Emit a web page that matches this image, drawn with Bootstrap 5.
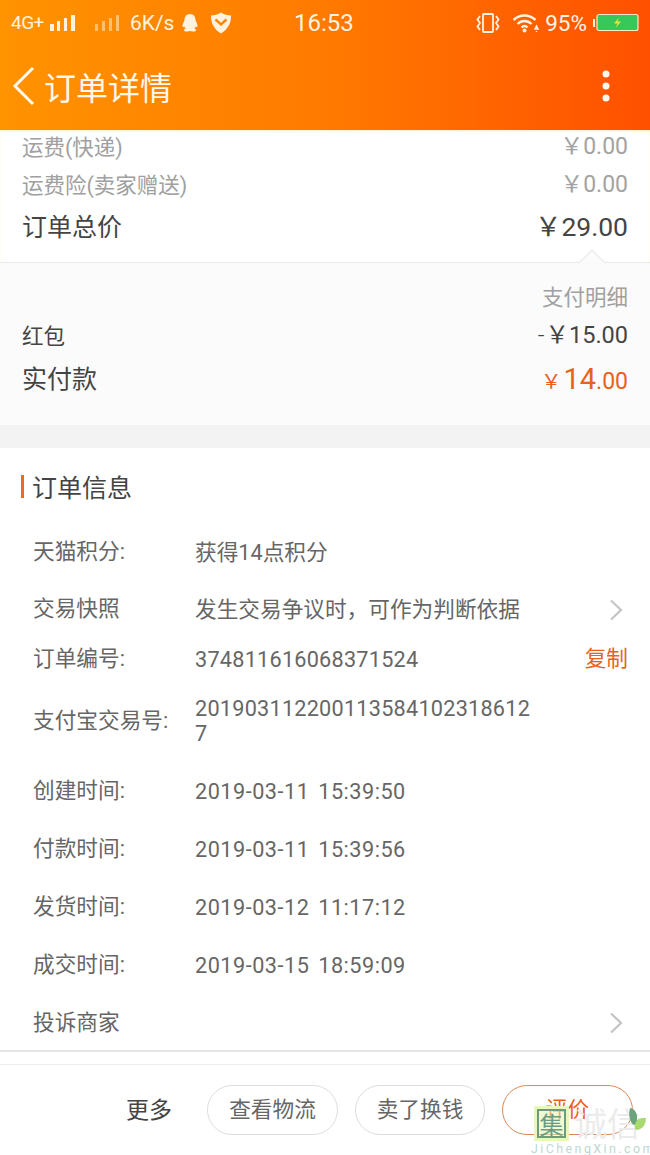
<!DOCTYPE html>
<html lang="zh">
<head>
<meta charset="utf-8">
<title>订单详情</title>
<link rel="stylesheet" href="https://cdn.jsdelivr.net/npm/bootstrap@5.3.0/dist/css/bootstrap.min.css">
<style>
html,body{margin:0;background:#fff;overflow:hidden}
body{width:650px;height:1155px;font-family:"Roboto","Noto Sans CJK SC",sans-serif;color:#666;position:relative}
.top-head{height:130px;background:linear-gradient(90deg,#ff9300 0%,#ff7a00 50%,#ff5000 100%);color:#fff3e0}
.stat-bar{height:46px;padding:0 11px;line-height:46px}
.stat-time{position:absolute;left:294px;top:0;font-size:24px}
.sig-txt{font-size:19px;letter-spacing:-.5px}
.sig-a{margin-left:5px}.sig-b{margin-left:18px}
.speed-txt{font-size:21px;margin-left:10px}
.qq-ico{margin-left:7px}.shield-ico{margin-left:12px}
.vib-ico{margin-left:auto}.wifi-ico{margin-left:12px}
.pct-txt{font-size:22.5px;margin-left:6px}.batt-ico{margin-left:6px}
.title-bar{height:84px;padding:0 40px 4px 12px}
.title-txt{font-size:32px;line-height:80px;margin-left:8px;color:#fff8ec;font-family:"Noto Sans CJK SC",sans-serif}
.fee-box{height:132px;padding:0 22px;box-shadow:inset 0 2px 3px -1px #ffeebb}
.fee-a{height:37px}.fee-b{height:39px}.fee-c{height:42px;padding-top:1px}
.soft{font-size:21.5px;color:#a0a0a0}
.strong-l{font-size:25px;color:#444}
.strong-r{font-size:26.5px;color:#444;margin-bottom:1px}
.soft-r{font-size:23px;color:#a3a3a3;margin-bottom:3px}
.pay-box{height:163px;padding:16px 22px 0;background:#fbfbfb;border-top:1px solid #e8e8e8;position:relative}
.pay-caret{position:absolute;left:583px;top:-10px;width:18px;height:18px;background:#fbfbfb;border-left:1px solid #e8e8e8;border-top:1px solid #e8e8e8;transform:rotate(45deg)}
.pay-a{height:38px}.pay-b{height:40px}.pay-c{height:46px}
.dark-m{font-size:21.5px;color:#444}
.dark-n{font-size:23.5px;color:#444;margin-bottom:3px}
.dash-thin{font-weight:300;margin-right:1px}
.hot{color:#e9611a}
.hot-s{font-size:20.5px}.hot-b{font-size:29px;margin:0 0 0 2px}.hot-t{font-size:23px}
.gap-band{height:23px;background:#f3f3f3}
.info-box{height:602px}
.info-head{height:75px;padding:2px 21px 0}
.info-bar{width:3px;height:23px;background:#f06a1c;margin-right:8px}
.info-title{font-size:25px;color:#444;font-family:"Noto Sans CJK SC",sans-serif}
.info-row{padding:0 22px 0 33px;font-size:21.67px;color:#666}
.info-lab{width:162px;flex:none}
.info-val{width:345px;flex:none;line-height:25px;word-break:break-all}
.num-val{letter-spacing:.24px}
.time-val{letter-spacing:.5px;word-spacing:3px}
.h58{height:58px}.h57{height:57px}.h42{height:42px}.h82{height:82px}.h56{height:56px;padding-top:2px}
.chev{margin-left:auto;margin-right:5px}
.copy-link{margin-left:auto;color:#e9611a;font-size:21.67px;white-space:nowrap}
.foot-line{height:15px;border-top:2px solid #e6e6e6;border-bottom:1px solid #ececec}
.foot-bar{height:90px;padding:0 17px 0 0;gap:17px}
.more-txt{font-size:23px;color:#444;margin-right:18px;padding-top:2px}
.pill{width:131px;height:50px;border:1px solid #ddd;border-radius:25px;font-size:21.67px;color:#666;background:#fff;padding-top:1px}
.pill-mid{width:130px}
.pill-hot{border-color:#d9885a;color:#e9611a}
.wm{position:absolute;left:528px;top:1100px;width:122px;height:55px;pointer-events:none}
.wm-box{position:absolute;left:9px;top:9px;width:29px;height:29px;border:2px solid #6f9a80;box-shadow:0 0 0 3px #e6f8bb;background:rgba(226,247,176,.55);color:#6f9a80;font-size:24px;line-height:25px;text-align:center;font-family:"Noto Sans CJK SC",sans-serif}
.wm-name{position:absolute;left:46px;top:2px;font-size:33px;line-height:40px;color:#ebebeb;font-family:"Noto Sans CJK SC",sans-serif;white-space:nowrap}
.wm-url{position:absolute;left:3px;top:42px;font-size:12.5px;line-height:14px;letter-spacing:2.4px;color:#bcd8d2;white-space:nowrap}
.wm-leaf{position:absolute;left:99px;top:7px}
</style>
</head>
<body>
<header class="top-head">
  <div class="stat-bar d-flex align-items-center position-relative">
    <span class="sig-txt">4G+</span>
    <svg class="sig-a" width="27" height="20" viewBox="0 0 27 20" fill="#fff3e0"><rect x="1" y="11" width="4" height="7"/><rect x="8" y="8" width="3" height="10"/><rect x="15" y="5" width="3" height="13"/><rect x="22" y="2" width="4" height="16"/></svg>
    <svg class="sig-b" width="26" height="20" viewBox="0 0 26 20" fill="#ffc070"><rect x="1" y="11" width="3" height="7"/><rect x="8" y="8" width="3" height="10"/><rect x="15" y="5" width="3" height="13"/><rect x="22" y="2" width="3" height="16"/></svg>
    <span class="speed-txt">6K/s</span>
    <svg class="qq-ico" width="18" height="20" viewBox="0 0 18 20" fill="#fff3e0"><path d="M9 1c3.700 0 5.500 2.800 5.500 6 0 .8 2 3.700 2 6 0 1.500-.9 1.400-1.800.2-.2 1-.8 1.900-1.400 2.400 1 .4 1.700 1 1.700 1.700 0 1-2 1.500-3.600 1.200-.9-.2-1.600-.6-2.400-.6s-1.500.4-2.400.6c-1.600.3-3.600-.2-3.600-1.200 0-.7.700-1.300 1.700-1.700-.6-.5-1.200-1.400-1.400-2.400-.9 1.200-1.800 1.300-1.800-.2 0-2.300 2-5.200 2-6C3.500 3.800 5.300 1 9 1z"/></svg>
    <svg class="shield-ico" width="20" height="22" viewBox="0 0 20 22"><path d="M0 3.500C3.500 3.500 7 2.500 10 .5c3 2 6.500 3 10 3 .3 7.500-3.500 14-10 18C3.500 17.500-.3 11 0 3.500z" fill="#fff3e0"/><path d="M4.500 7.500 10 12.500l5.500-5" fill="none" stroke="#ff8500" stroke-width="2.400"/></svg>
    <span class="stat-time">16:53</span>
    <svg class="vib-ico" width="24" height="22" viewBox="0 0 24 22" fill="none" stroke="#fff3e0" stroke-width="1.800"><rect x="7" y="2" width="10" height="18" rx="1"/><path d="M4 4 1.500 7.500 4 11 1.500 14.500 4 18M20 4l2.500 3.500L20 11l2.500 3.500L20 18"/></svg>
    <svg class="wifi-ico" width="27" height="20" viewBox="0 0 27 20" fill="none" stroke="#fff3e0" stroke-width="2.400"><path d="M1.500 7c6.500-6 15.500-6 22 0M5.500 11c4-4 10-4 14 0M9.500 14.500c2-2 4-2 6 0"/><circle cx="12.500" cy="17.500" r="2" fill="#fff3e0" stroke="none"/><path d="M24.500 13l-1.500 3h3zM24.500 19v-1" stroke-width="1.500"/></svg>
    <span class="pct-txt">95%</span>
    <svg class="batt-ico" width="46" height="20" viewBox="0 0 46 20"><rect x="0" y="6" width="2" height="8" fill="#fff3e0"/><rect x="4" y="1.500" width="41" height="16" rx="2" fill="#36c85a" stroke="#ffe8c8" stroke-width="1.200"/><path d="M26 4.500 21 10.500h3.500L22.500 15l5.500-6.500h-3.500z" fill="#e6e63c"/></svg>
  </div>
  <div class="title-bar d-flex align-items-center justify-content-between">
    <div class="d-flex align-items-center">
      <svg width="24" height="40" viewBox="0 0 24 40" fill="none" stroke="#fff8ec" stroke-width="3"><path d="M21 2 3 20l18 18"/></svg>
      <span class="title-txt">订单详情</span>
    </div>
    <svg width="8" height="32" viewBox="0 0 8 32" fill="#fff8ec"><circle cx="4" cy="4" r="3.500"/><circle cx="4" cy="16" r="3.500"/><circle cx="4" cy="28" r="3.500"/></svg>
  </div>
</header>

<section class="fee-box">
  <div class="fee-a d-flex justify-content-between align-items-center"><span class="soft">运费(快递)</span><span class="soft-r">￥0.00</span></div>
  <div class="fee-b d-flex justify-content-between align-items-center"><span class="soft">运费险(卖家赠送)</span><span class="soft-r">￥0.00</span></div>
  <div class="fee-c d-flex justify-content-between align-items-center"><span class="strong-l">订单总价</span><span class="strong-r">￥29.00</span></div>
</section>

<section class="pay-box">
  <i class="pay-caret"></i>
  <div class="pay-a d-flex justify-content-end align-items-center"><span class="soft">支付明细</span></div>
  <div class="pay-b d-flex justify-content-between align-items-center"><span class="dark-m">红包</span><span class="dark-n"><span class="dash-thin">-</span>￥15.00</span></div>
  <div class="pay-c d-flex justify-content-between align-items-center"><span class="strong-l">实付款</span><span class="hot"><span class="hot-s">￥</span><span class="hot-b">14</span><span class="hot-t">.00</span></span></div>
</section>
<div class="gap-band"></div>

<section class="info-box">
  <div class="info-head d-flex align-items-center"><i class="info-bar"></i><span class="info-title">订单信息</span></div>
  <div class="info-row h58 d-flex align-items-center"><span class="info-lab">天猫积分:</span><span class="info-val">获得14点积分</span></div>
  <div class="info-row h57 d-flex align-items-center"><span class="info-lab">交易快照</span><span class="info-val">发生交易争议时，可作为判断依据</span>
    <svg class="chev" width="14" height="22" viewBox="0 0 14 22" fill="none" stroke="#c4c4c4" stroke-width="2.200"><path d="M2 1.500 12 11 2 20.500"/></svg></div>
  <div class="info-row h42 d-flex align-items-center"><span class="info-lab">订单编号:</span><span class="info-val num-val">374811616068371524</span><span class="copy-link">复制</span></div>
  <div class="info-row h82 d-flex align-items-center"><span class="info-lab">支付宝交易号:</span><span class="info-val num-val">2019031122001135841023186127</span></div>
  <div class="info-row h58 d-flex align-items-center"><span class="info-lab">创建时间:</span><span class="info-val time-val">2019-03-11 15:39:50</span></div>
  <div class="info-row h58 d-flex align-items-center"><span class="info-lab">付款时间:</span><span class="info-val time-val">2019-03-11 15:39:56</span></div>
  <div class="info-row h58 d-flex align-items-center"><span class="info-lab">发货时间:</span><span class="info-val time-val">2019-03-12 11:17:12</span></div>
  <div class="info-row h58 d-flex align-items-center"><span class="info-lab">成交时间:</span><span class="info-val time-val">2019-03-15 18:59:09</span></div>
  <div class="info-row h56 d-flex align-items-center"><span class="info-lab">投诉商家</span>
    <svg class="chev" width="14" height="22" viewBox="0 0 14 22" fill="none" stroke="#c4c4c4" stroke-width="2.200"><path d="M2 1.500 12 11 2 20.500"/></svg></div>
</section>

<div class="foot-line"></div>
<footer class="foot-bar d-flex justify-content-end align-items-center">
  <span class="more-txt">更多</span>
  <span class="pill d-flex align-items-center justify-content-center">查看物流</span>
  <span class="pill pill-mid d-flex align-items-center justify-content-center">卖了换钱</span>
  <span class="pill pill-hot d-flex align-items-center justify-content-center">评价</span>
</footer>

<div class="wm">
  <span class="wm-box">集</span>
  <span class="wm-name">诚信</span>
  <svg class="wm-leaf" width="20" height="26" viewBox="0 0 20 26"><path d="M3 1c5 1 8 5 7 13 0 3-1 4-3 4C3 16 1 8 3 1z" fill="#6ba37c"/><path d="M9 15c2-4 5-4 10-4 0 7-4 12-10 12-2-2-2-5 0-8z" fill="#a9da70"/></svg>
  <span class="wm-url">JiChengXin.com</span>
</div>
<script src="https://cdn.jsdelivr.net/npm/bootstrap@5.3.0/dist/js/bootstrap.bundle.min.js"></script>
</body>
</html>
